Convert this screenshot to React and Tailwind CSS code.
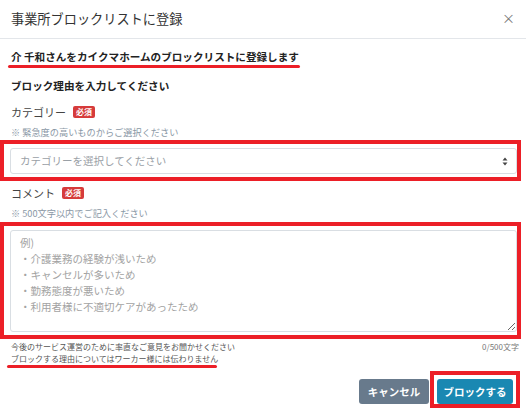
import React from 'react';

const RED = 'bg-[#ec1f27]';

function Required() {
  return (
    <span className="ml-[7px] inline-flex h-[12px] items-center rounded-[2px] bg-[#d63b3b] px-[3px] text-[8px] font-bold leading-none text-white">
      必須
    </span>
  );
}

export default function App() {
  return (
    <div className="h-[410px] w-[526px] overflow-hidden bg-white font-['Noto_Sans_CJK_JP','Noto_Sans',sans-serif] text-[#333]">
      {/* header */}
      <div className="flex h-[39px] items-center justify-between border-b border-[#e3e6ea] pl-[11px] pr-[11px]">
        <h1 className="text-[13.2px] leading-none text-[#333]">事業所ブロックリストに登録</h1>
        <span className="-mt-[3px] text-[13px] leading-none text-[#777]">×</span>
      </div>

      <div className="pt-[10px]">
        <p className="pl-[11px] text-[10.6px] font-bold leading-[16px] text-[#222]">
          介 千和さんをカイクマホームのブロックリストに登録します
        </p>
        <div className={`ml-[8px] h-[3px] w-[292px] rounded-full ${RED}`} />

        <p className="mt-[10px] pl-[11px] text-[10.6px] font-bold leading-[16px] text-[#222]">
          ブロック理由を入力してください
        </p>

        <div className="mt-[10px] flex h-[16px] items-center pl-[11px] text-[11px] text-[#444]">
          カテゴリー
          <Required />
        </div>
        <p className="mt-[4px] pl-[11px] text-[9.2px] leading-[16px] text-[#8a98a6]">
          ※ 緊急度の高いものからご選択ください
        </p>

        {/* category select */}
        <div className="w-[521px] border-4 border-[#ec1f27] pt-[4px] pb-[3px] pl-[6px]">
          <div className="flex h-[26px] items-center justify-between rounded-[3px] border border-[#d9dee3] pl-[9px] pr-[6px]">
            <span className="text-[10.5px] text-[#9aa0a6]">カテゴリーを選択してください</span>
            <svg width="6" height="9" viewBox="0 0 6 9" className="mr-[2px]">
              <path d="M3 0.5L5.5 3.5H0.5Z" fill="#444" />
              <path d="M3 8.5L5.5 5.5H0.5Z" fill="#444" />
            </svg>
          </div>
        </div>

        <div className="mt-[4px] flex h-[16px] items-center pl-[11px] text-[11px] text-[#444]">
          コメント
          <Required />
        </div>
        <p className="mt-[4px] pl-[11px] text-[9.2px] leading-[16px] text-[#8a98a6]">
          ※ 500文字以内でご記入ください
        </p>

        {/* comment textarea */}
        <div className="mt-[1px] w-[521px] border-4 border-[#ec1f27] pt-[4px] pb-[3px] pl-[6px]">
          <textarea
            className="block h-[102px] w-full resize-y rounded-[3px] border border-[#d9dee3] px-[9px] pt-[4px] text-[10.5px] leading-[16px] text-[#333] outline-none placeholder:text-[#a3a3a3]"
            placeholder={'例)\n・介護業務の経験が浅いため\n・キャンセルが多いため\n・勤務態度が悪いため\n・利用者様に不適切ケアがあったため'}
          />
        </div>

        <div className="flex justify-between pl-[11px] pr-[7px] pt-[2px] text-[8px] leading-[12px] text-[#555]">
          <div>
            <p>今後のサービス運営のために率直なご意見をお聞かせください</p>
            <p>ブロックする理由についてはワーカー様には伝わりません</p>
          </div>
          <p className="text-[#777]">0/500文字</p>
        </div>
        <div className={`ml-[7px] h-[3px] w-[210px] rounded-full ${RED}`} />

        {/* actions */}
        <div className="mt-[3px] flex items-end justify-end pr-[6px]">
          <button className="mb-[4px] mr-[1px] h-[25px] w-[70px] rounded-[3px] bg-[#687a8c] text-[10.5px] font-bold text-white">
            キャンセル
          </button>
          <div className="border-4 border-[#ec1f27] px-[3px] pt-[2px]">
            <button className="h-[25px] w-[76px] rounded-[3px] bg-[#1a88b2] text-[10.5px] font-bold text-white">
              ブロックする
            </button>
          </div>
        </div>
      </div>
    </div>
  );
}
